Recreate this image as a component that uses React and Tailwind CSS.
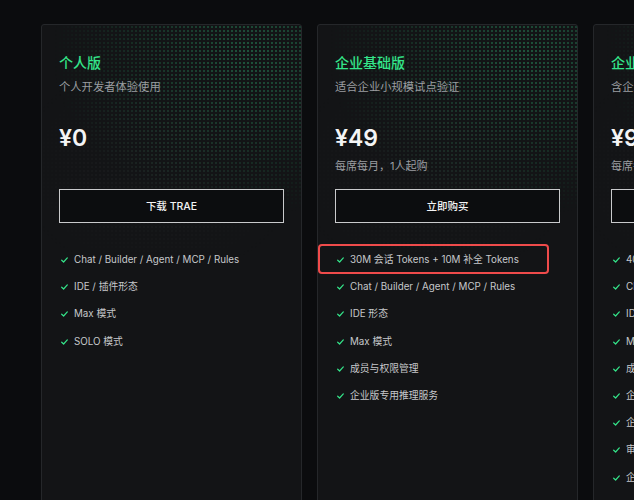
import React from 'react';

const plans = [
    {
        name: '个人版',
        desc: '个人开发者体验使用',
        price: '¥0',
        note: '',
        cta: '下载 TRAE',
        features: ['Chat / Builder / Agent / MCP / Rules', 'IDE / 插件形态', 'Max 模式', 'SOLO 模式'],
    },
    {
        name: '企业基础版',
        desc: '适合企业小规模试点验证',
        price: '¥49',
        note: '每席每月，1人起购',
        cta: '立即购买',
        highlight: 0,
        features: [
            '30M 会话 Tokens + 10M 补全 Tokens',
            'Chat / Builder / Agent / MCP / Rules',
            'IDE 形态',
            'Max 模式',
            '成员与权限管理',
            '企业版专用推理服务',
        ],
    },
    {
        name: '企业专业版',
        desc: '含企业基础版全部权益',
        price: '¥99',
        note: '每席每月，10人起购',
        cta: '联系销售',
        features: [
            '40M 会话 Tokens + 20M 补全 Tokens',
            'Chat / Builder / Agent / MCP / Rules',
            'IDE / 插件形态',
            'Max 模式',
            '成员与权限管理',
            '企业版专用推理服务',
            '企业知识库',
            '审计日志',
            '企业级安全合规',
        ],
    },
];

const Check = () => (
    <svg width="7" height="6" viewBox="0 0 7 6" fill="none" className="shrink-0 ml-[2px]">
        <path d="M0.7 3.2 L2.6 5 L6.3 0.9" stroke="#34e58a" strokeWidth="1.2" strokeLinecap="round" strokeLinejoin="round" />
    </svg>
);

const PlanCard = ({ plan }) => (
    <div className="relative w-[261px] h-[520px] shrink-0 rounded-[3px] border border-[#25272a] bg-[#131416] overflow-hidden">
        {/* dotted glow, fades out toward the lower left */}
        <div className="absolute left-0 top-0 w-full h-[240px] bg-[radial-gradient(circle,rgba(52,200,130,0.5)_0.9px,transparent_1.1px)] bg-size-[4px_4px] [mask-image:radial-gradient(ellipse_90%_80%_at_80%_12%,rgba(0,0,0,0.9)_0%,rgba(0,0,0,0.4)_45%,transparent_85%)] opacity-80" />
        <div className="absolute left-0 top-0 w-full h-[240px] bg-[radial-gradient(circle,rgba(160,170,165,0.25)_0.9px,transparent_1.1px)] bg-size-[4px_4px] [mask-image:radial-gradient(ellipse_70%_60%_at_45%_60%,rgba(0,0,0,0.5),transparent_80%)] opacity-50" />

        <div className="relative flex flex-col px-[17px] pt-[28px]">
            <h3 className="text-[14px] leading-[20px] font-medium text-[#34e58a]">{plan.name}</h3>
            <p className="mt-[6px] text-[11.3px] leading-[16px] text-[#9b9da1]">{plan.desc}</p>

            <div className="mt-[29px] text-[23px] leading-[28px] font-semibold text-[#f4f4f5]">{plan.price}</div>
            <p className="mt-[6px] h-[16px] text-[11px] leading-[16px] text-[#9b9da1]">{plan.note}</p>

            <button className="mt-[15px] h-[34px] w-full border border-[#c9cacc] bg-[#0c0d0f] pt-[2px] text-[10.5px] font-medium text-[#f4f4f5]">
                {plan.cta}
            </button>

            <ul className="mt-[29px] flex flex-col gap-[11.2px]">
                {plan.features.map((f, i) => (
                    <li key={f} className="relative flex items-center gap-[6px] text-[9.8px] leading-[16px] text-[#c6c8cb] whitespace-nowrap">
                        <Check />
                        <span>{f}</span>
                        {plan.highlight === i && (
                            <span className="absolute left-[-17px] top-[-8px] w-[231px] h-[30px] rounded-[4px] border-2 border-[#ef4b4b]" />
                        )}
                    </li>
                ))}
            </ul>
        </div>
    </div>
);

const App = () => {
    return (
        <div
            className="w-[634px] h-[500px] overflow-hidden bg-[#0b0c0e]"
            style={{ fontFamily: 'Inter, "Noto Sans CJK SC", sans-serif' }}
        >
            <div className="flex gap-[15px] pl-[41px] pt-[24px]">
                {plans.map((p) => (
                    <PlanCard key={p.name} plan={p} />
                ))}
            </div>
        </div>
    );
};

export default App;
